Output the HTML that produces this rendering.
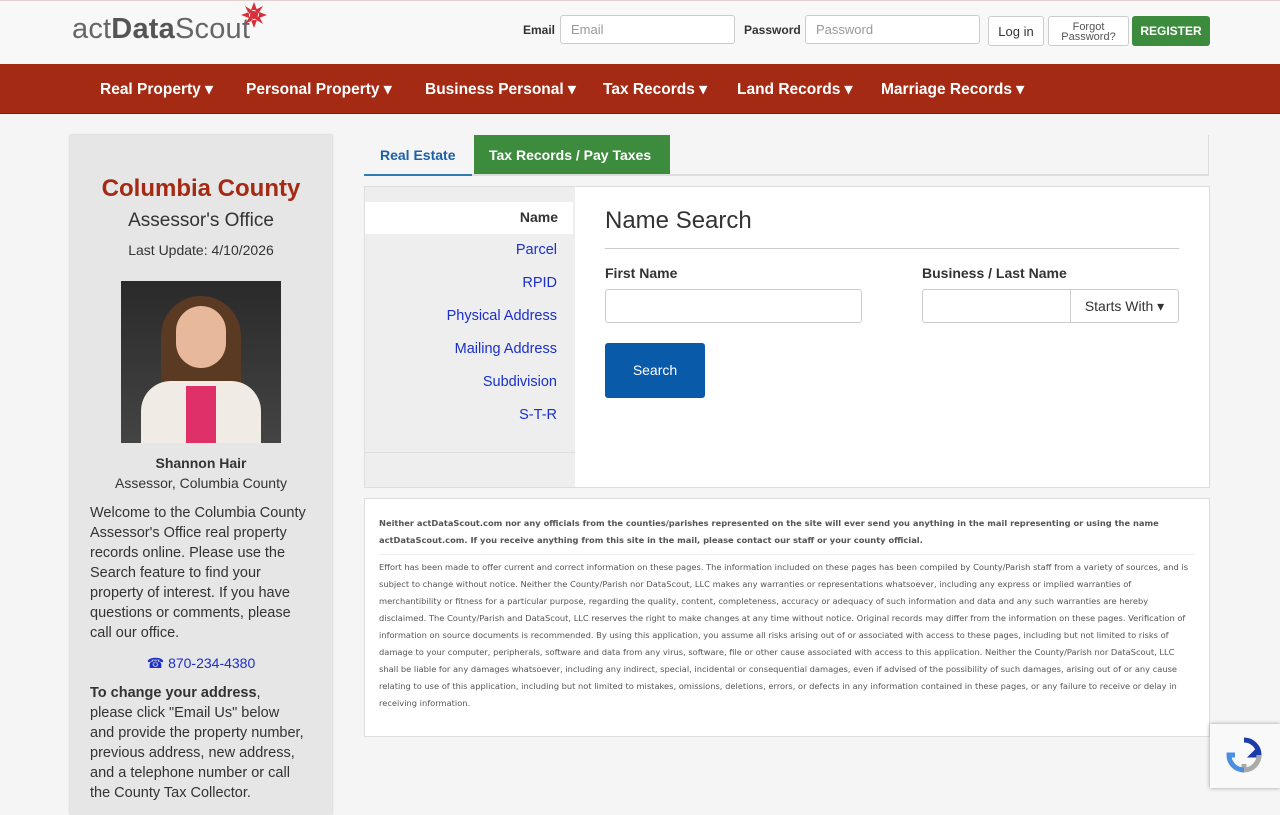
<!DOCTYPE html><html><head><style>
*{box-sizing:border-box;margin:0;padding:0}
body{width:1280px;height:800px;overflow:hidden;background:#f5f5f5;font-family:"Liberation Sans",sans-serif;color:#333;position:relative}
.a{position:absolute}
.hdr{top:0;left:0;width:1280px;height:64px;background:#f8f8f8;border-top:1px solid #e0d0d0}
.inp{background:#fff;border:1px solid #ccc;border-radius:3px;height:29px;font-size:13px;color:#999;padding:6px 10px}
.btn{border:1px solid #ccc;border-radius:3px;background:#fff;font-size:13px;text-align:center}
.nav{top:64px;left:0;width:1280px;height:50px;background:#a52a14;border-bottom:1px solid #7a1e0e}
.nav span{position:absolute;top:16px;color:#fff;font-weight:bold;font-size:15.5px}
.side{left:70px;top:135px;width:262px;height:680px;background:#e6e6e6;box-shadow:0 0 2px #bbb}
.c{text-align:center;width:262px;left:0}
.lt{font-size:14.5px;color:#1a2fcb;right:17px;text-align:right}
</style></head><body>
<div class="a hdr"></div>
<div class="a" style="left:72px;top:13px;font-size:29px;color:#666;letter-spacing:.2px">act<b style="color:#555">Data</b>Scout</div>
<svg class="a" style="left:240px;top:1px" width="28" height="28" viewBox="0 0 28 28"><g fill="#d8303a"><circle cx="14" cy="14" r="4"/><path d="M14 1l3 8h-6zM14 27l3-8h-6zM1 14l8 3v-6zM27 14l-8 3v-6zM5 5l8 5-4 3zM23 23l-8-5 4-3zM23 5l-5 8-3-4zM5 23l5-8 3 4z"/></g></svg>
<div class="a" style="left:523px;top:23px;font-size:12px;font-weight:bold">Email</div>
<div class="a inp" style="left:560px;top:15px;width:175px">Email</div>
<div class="a" style="left:744px;top:23px;font-size:12px;font-weight:bold">Password</div>
<div class="a inp" style="left:805px;top:15px;width:175px">Password</div>
<div class="a btn" style="left:988px;top:16px;width:56px;height:30px;padding-top:7px">Log in</div>
<div class="a btn" style="left:1048px;top:16px;width:81px;height:30px;font-size:11px;line-height:10px;padding-top:5px;color:#555">Forgot<br>Password?</div>
<div class="a" style="left:1132px;top:16px;width:78px;height:30px;background:#3d8b3d;border-radius:3px;color:#fff;font-size:12px;font-weight:bold;text-align:center;padding-top:8px">REGISTER</div>
<div class="a nav"><span style="left:100px">Real Property ▾</span><span style="left:246px">Personal Property ▾</span><span style="left:425px">Business Personal ▾</span><span style="left:603px">Tax Records ▾</span><span style="left:737px">Land Records ▾</span><span style="left:881px">Marriage Records ▾</span></div>
<div class="a side">
<div class="a c" style="top:40px;font-size:24px;font-weight:bold;color:#a52a14">Columbia County</div>
<div class="a c" style="top:75px;font-size:19px">Assessor's Office</div>
<div class="a c" style="top:107px;font-size:14px">Last Update: 4/10/2026</div>
<div class="a" style="left:51px;top:146px;width:160px;height:162px;background:linear-gradient(#2a2a2a,#444);overflow:hidden"><div class="a" style="left:40px;top:15px;width:80px;height:140px;border-radius:40px 40px 10px 10px;background:#5a3a22"></div><div class="a" style="left:55px;top:25px;width:50px;height:62px;border-radius:25px;background:#e8b89a"></div><div class="a" style="left:20px;top:100px;width:120px;height:70px;border-radius:30px 30px 0 0;background:#f0ebe4"></div><div class="a" style="left:65px;top:105px;width:30px;height:60px;background:#e0306a"></div></div>
<div class="a c" style="top:320px;font-size:14px;font-weight:bold">Shannon Hair</div>
<div class="a c" style="top:340px;font-size:14px">Assessor, Columbia County</div>
<div class="a" style="left:20px;top:368px;width:225px;font-size:14.5px;line-height:20px">Welcome to the Columbia County Assessor's Office real property records online. Please use the Search feature to find your property of interest. If you have questions or comments, please call our office.</div>
<div class="a c" style="top:520px;font-size:14px;color:#1a2fcb">☎ 870-234-4380</div>
<div class="a" style="left:20px;top:548px;width:214px;font-size:14.5px;line-height:20px"><b>To change your address</b>, please click "Email Us" below and provide the property number, previous address, new address, and a telephone number or call the County Tax Collector.</div>
</div>
<div class="a" style="left:364px;top:135px;width:845px;height:41px;border-bottom:2px solid #ddd;border-right:1px solid #ddd"></div>
<div class="a" style="left:364px;top:135px;width:108px;height:41px;border-bottom:2px solid #337ab7;color:#1a5fa8;font-weight:bold;font-size:14px;padding:12px 16px">Real Estate</div>
<div class="a" style="left:474px;top:135px;width:196px;height:39px;background:#3d8b3d;color:#fff;font-weight:bold;font-size:14px;padding:12px 15px">Tax Records / Pay Taxes</div>
<div class="a" style="left:364px;top:186px;width:846px;height:302px;background:#fff;border:1px solid #ddd"></div>
<div class="a" style="left:365px;top:187px;width:210px;height:300px;background:#eee"></div>
<div class="a" style="left:365px;top:452px;width:210px;height:1px;background:#ddd"></div>
<div class="a" style="left:365px;top:202px;width:208px;height:32px;background:#fff;font-size:14px;font-weight:bold;text-align:right;padding:7px 15px">Name</div>
<div class="a lt" style="left:365px;width:192px;top:242px">Parcel</div>
<div class="a lt" style="left:365px;width:192px;top:275px">RPID</div>
<div class="a lt" style="left:365px;width:192px;top:308px">Physical Address</div>
<div class="a lt" style="left:365px;width:192px;top:341px">Mailing Address</div>
<div class="a lt" style="left:365px;width:192px;top:374px">Subdivision</div>
<div class="a lt" style="left:365px;width:192px;top:407px">S-T-R</div>
<div class="a" style="left:605px;top:207px;font-size:24px;color:#333">Name Search</div>
<div class="a" style="left:605px;top:248px;width:574px;height:1px;background:#ccc"></div>
<div class="a" style="left:605px;top:265px;font-size:14px;font-weight:bold">First Name</div>
<div class="a" style="left:922px;top:265px;font-size:14px;font-weight:bold">Business / Last Name</div>
<div class="a inp" style="left:605px;top:289px;width:257px;height:34px"></div>
<div class="a inp" style="left:922px;top:289px;width:150px;height:34px;border-radius:3px 0 0 3px"></div>
<div class="a btn" style="left:1070px;top:289px;width:109px;height:34px;font-size:14px;padding-top:8px;border-radius:0 3px 3px 0">Starts With ▾</div>
<div class="a" style="left:605px;top:343px;width:100px;height:55px;background:#0a5aaa;border-radius:3px;color:#fff;font-size:14px;text-align:center;padding-top:19px">Search</div>
<div class="a" style="left:364px;top:498px;width:846px;height:239px;background:#fff;border:1px solid #ddd;padding:16px 14px;font-family:'DejaVu Sans',sans-serif;font-size:8.3px;color:#555">
<div style="font-weight:bold;line-height:17px">Neither actDataScout.com nor any officials from the counties/parishes represented on the site will ever send you anything in the mail representing or using the name actDataScout.com. If you receive anything from this site in the mail, please contact our staff or your county official.</div>
<div style="border-top:1px solid #eee;margin-top:5px;padding-top:4px;line-height:17px">Effort has been made to offer current and correct information on these pages. The information included on these pages has been compiled by County/Parish staff from a variety of sources, and is subject to change without notice. Neither the County/Parish nor DataScout, LLC makes any warranties or representations whatsoever, including any express or implied warranties of merchantibility or fitness for a particular purpose, regarding the quality, content, completeness, accuracy or adequacy of such information and data and any such warranties are hereby disclaimed. The County/Parish and DataScout, LLC reserves the right to make changes at any time without notice. Original records may differ from the information on these pages. Verification of information on source documents is recommended. By using this application, you assume all risks arising out of or associated with access to these pages, including but not limited to risks of damage to your computer, peripherals, software and data from any virus, software, file or other cause associated with access to this application. Neither the County/Parish nor DataScout, LLC shall be liable for any damages whatsoever, including any indirect, special, incidental or consequential damages, even if advised of the possibility of such damages, arising out of or any cause relating to use of this application, including but not limited to mistakes, omissions, deletions, errors, or defects in any information contained in these pages, or any failure to receive or delay in receiving information.</div></div>
<div class="a" style="left:1210px;top:724px;width:70px;height:64px;background:#f9f9f9;box-shadow:0 0 4px #999"><svg style="margin:12px 15px" width="38" height="38" viewBox="0 0 38 38"><path d="M19 4a15 15 0 0 1 15 15h-6l4-4" fill="none" stroke="#1c3aa9" stroke-width="5"/><path d="M34 19a15 15 0 0 1-15 15v-6" fill="none" stroke="#aaa" stroke-width="5"/><path d="M19 34A15 15 0 0 1 4 19h6" fill="none" stroke="#4a90e2" stroke-width="5"/></svg></div>
</body></html>
